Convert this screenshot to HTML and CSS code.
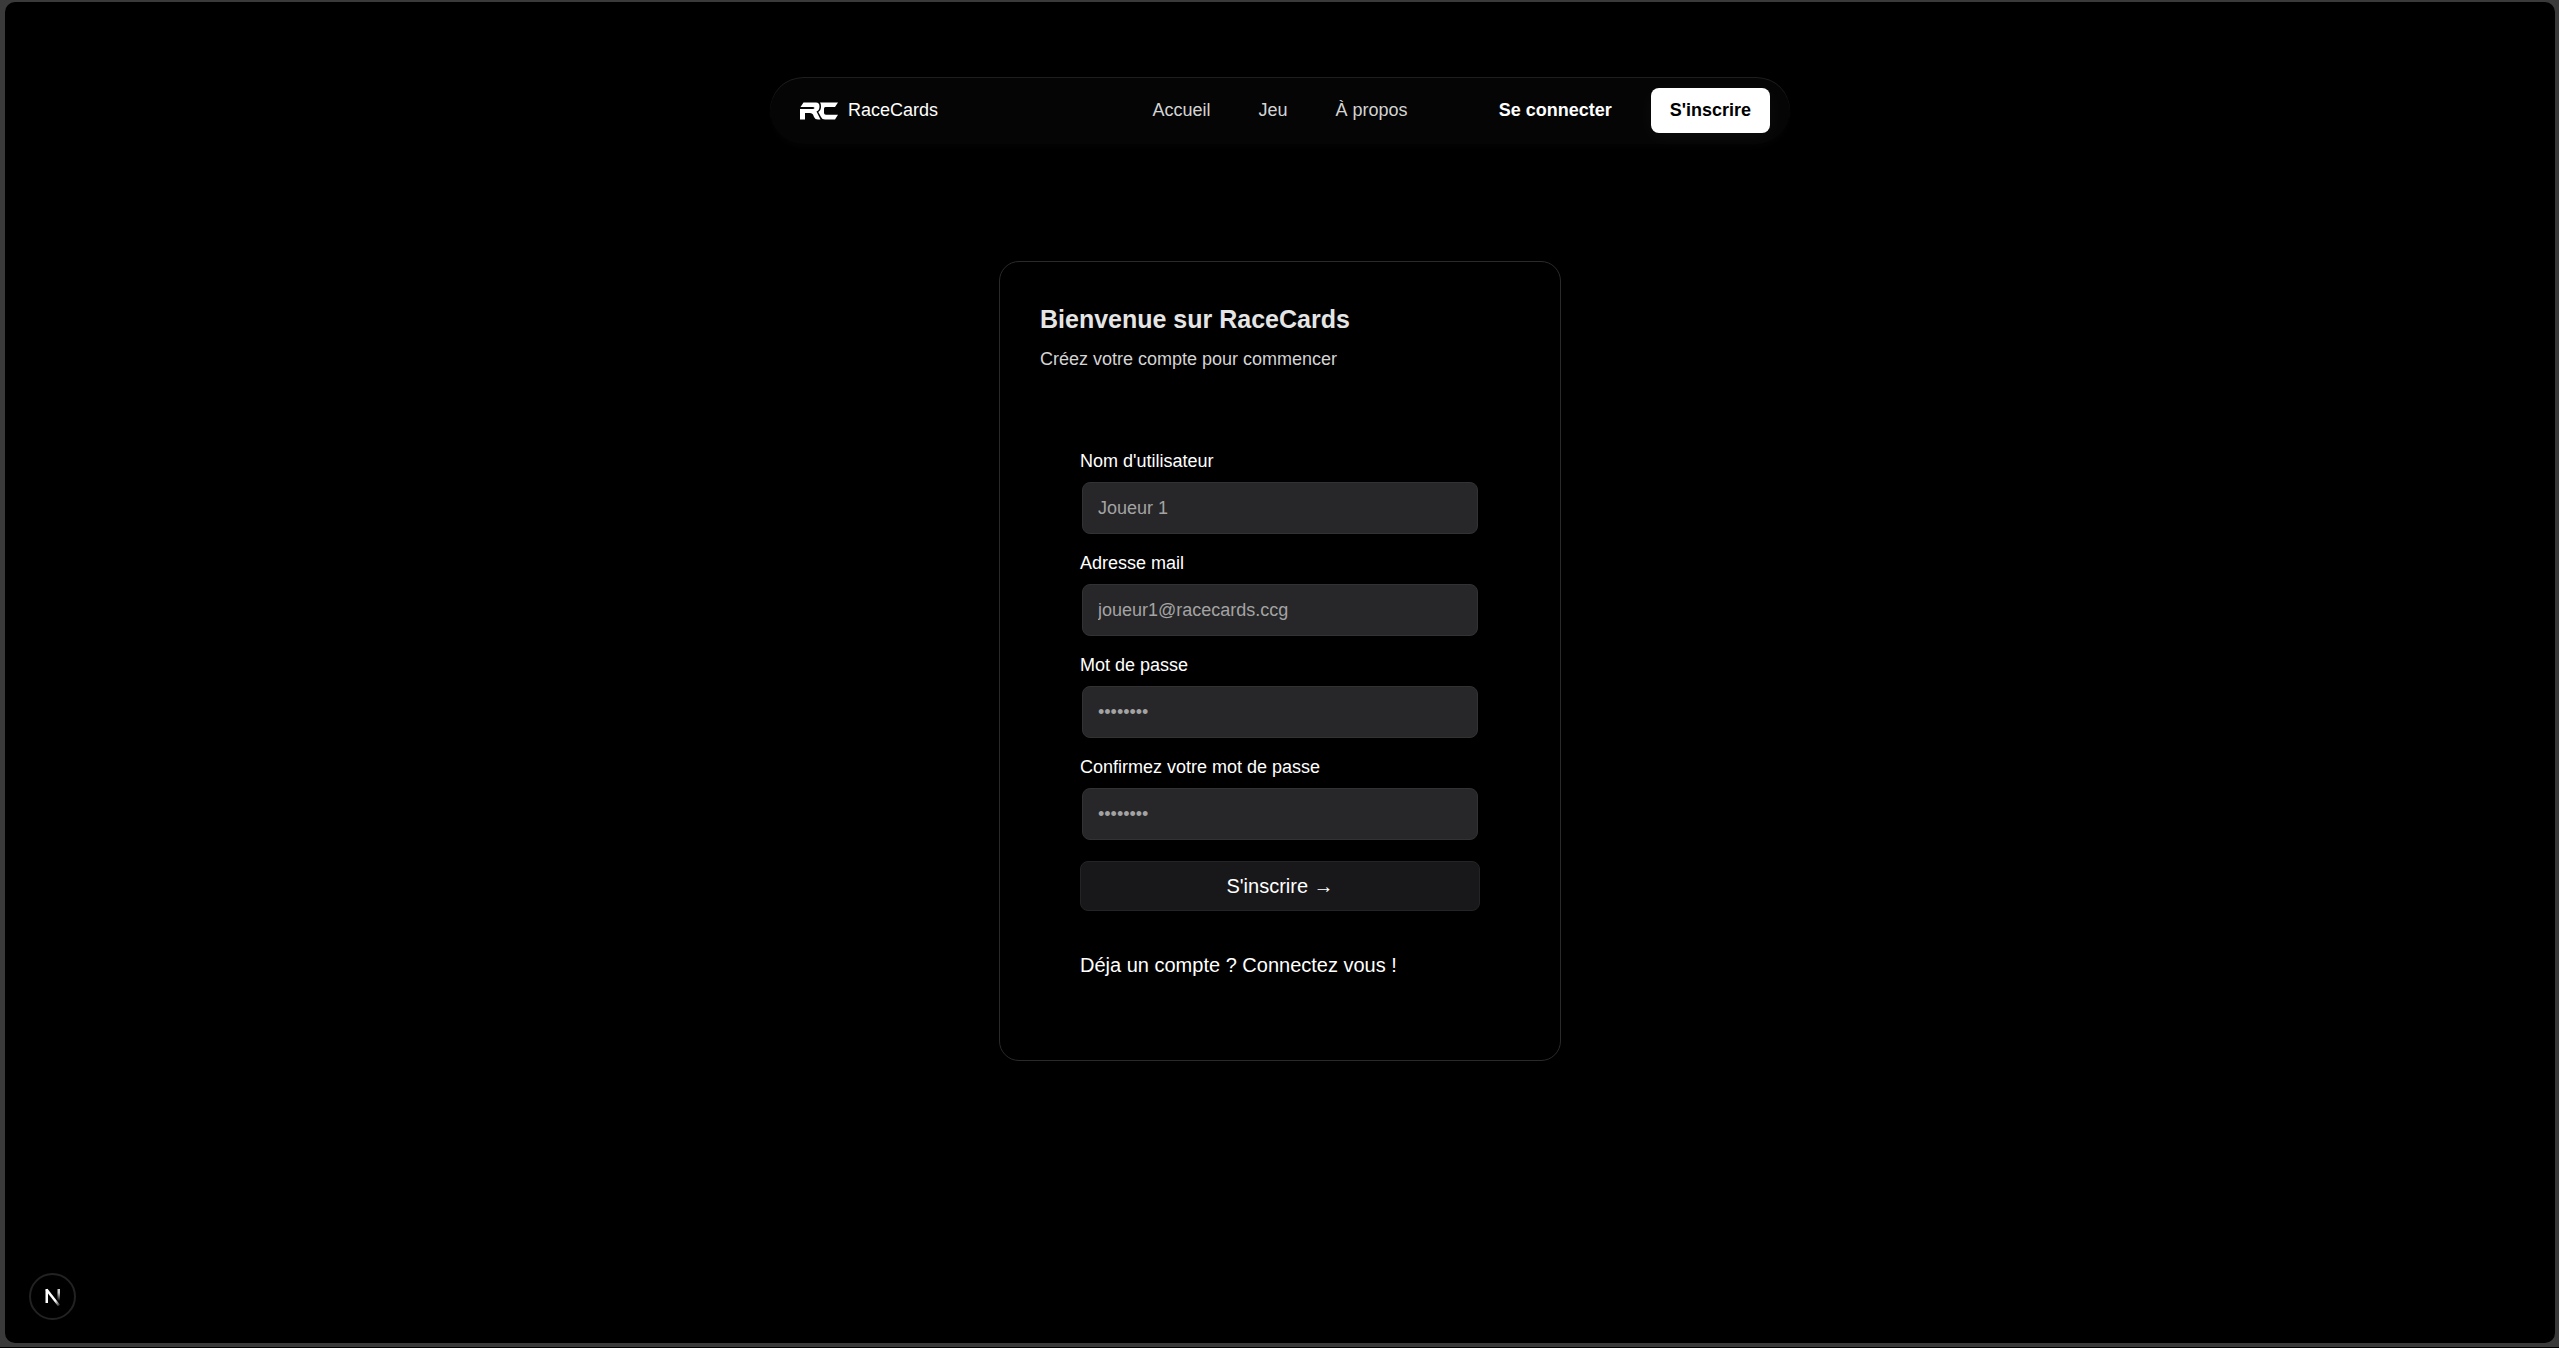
FILE: index.html
```
<!DOCTYPE html>
<html lang="fr">
<head>
    <meta charset="UTF-8">
    <meta name="viewport" content="width=device-width, initial-scale=1.0">
    <title>RaceCards</title>
    <link rel="stylesheet" href="styles.css">
</head>
<body>
    <div class="window">
        <header class="navbar">
            <a href="#" class="brand">
                <svg class="brand-logo" viewBox="0 0 38 18" aria-hidden="true">
                    <path d="M3.500 0.500H16Q19.500 0.500 19.500 4.500Q19.500 8.500 16.500 9.500L20.500 17.500H18Q15 17.500 14 15L13 12.500Q12 11 10 11H5V17.500H0V7H12.500Q14.500 7 14.500 6T12.500 5H0.500Z"/>
                    <path d="M20 0.500H38L35 5H25.500Q24 5 24 6.500V11Q24 12.800 26 12.800H38L35 17.500H25Q22 17.500 21 15L18.300 10Q21 8.500 21 4.500Q21 1.500 20 0.500Z"/>
                </svg>
                <span>RaceCards</span>
            </a>
            <nav class="nav-links">
                <a href="#">Accueil</a>
                <a href="#">Jeu</a>
                <a href="#">À propos</a>
            </nav>
            <div class="nav-actions">
                <a href="#" class="btn-text">Se connecter</a>
                <a href="#" class="btn-white">S'inscrire</a>
            </div>
        </header>

        <main class="card">
            <h1>Bienvenue sur RaceCards</h1>
            <p class="subtitle">Créez votre compte pour commencer</p>
            <form class="signup-form">
                <div class="form-group">
                    <label for="username">Nom d'utilisateur</label>
                    <input type="text" id="username" placeholder="Joueur 1">
                </div>
                <div class="form-group">
                    <label for="email">Adresse mail</label>
                    <input type="email" id="email" placeholder="joueur1@racecards.ccg">
                </div>
                <div class="form-group">
                    <label for="password">Mot de passe</label>
                    <input type="password" id="password" placeholder="••••••••">
                </div>
                <div class="form-group">
                    <label for="confirmPassword">Confirmez votre mot de passe</label>
                    <input type="password" id="confirmPassword" placeholder="••••••••">
                </div>
                <button type="submit" class="btn-submit">S'inscrire →</button>
                <a href="#" class="login-link">Déja un compte ? Connectez vous !</a>
            </form>
        </main>

        <button type="button" class="dev-badge" aria-label="Next.js">
            <svg viewBox="0 0 16 18" fill="none" aria-hidden="true">
                <defs>
                    <linearGradient id="fadeRight" x1="0" y1="0" x2="0" y2="1">
                        <stop offset="0.3" stop-color="#fff" stop-opacity="0.8"/>
                        <stop offset="1" stop-color="#fff" stop-opacity="0"/>
                    </linearGradient>
                    <linearGradient id="fadeDiagonal" x1="0" y1="0" x2="1" y2="1">
                        <stop offset="0.7" stop-color="#fff"/>
                        <stop offset="1" stop-color="#fff" stop-opacity="0.2"/>
                    </linearGradient>
                </defs>
                <rect x="0.500" y="1" width="2.500" height="14" fill="#fff"/>
                <rect x="12.500" y="1" width="2.500" height="12" fill="url(#fadeRight)"/>
                <path d="M1.500 1.500L14 17.500" stroke="url(#fadeDiagonal)" stroke-width="2.500"/>
            </svg>
        </button>
    </div>
</body>
</html>
```
FILE: styles.css
```
* {
    box-sizing: border-box;
}
html {
    background-color: #3a3a3a;
}
body {
    margin: 0;
    padding: 2px 4px 4px 5px;
    min-height: 100vh;
    display: flex;
    font-family: Arial, "Liberation Sans", sans-serif;
    font-size: 18px;
    line-height: 25px;
    color: #fff;
    border-bottom: 1px solid #000;
}
a {
    color: inherit;
    text-decoration: none;
}
.window {
    position: relative;
    flex: 1;
    display: flex;
    flex-direction: column;
    align-items: center;
    padding: 75px 0 20px;
    background-color: #000;
    border-radius: 10px;
}

/* Navbar */
.navbar {
    width: 40%;
    min-width: 960px;
    display: grid;
    grid-template-columns: 1fr auto 1fr;
    align-items: center;
    padding: 11px 20px;
    border-radius: 40px;
    background-color: #050505;
    box-shadow: 0 0 24px rgba(34, 42, 53, 0.06),
        0 4px 8px #050505,
        0 16px 68px rgba(47, 48, 55, 0.05),
        0 1px 0 rgba(255, 255, 255, 0.1) inset;
}
.brand {
    display: flex;
    align-items: center;
    gap: 10px;
    padding-left: 10px;
}
.brand-logo {
    width: 38px;
    height: 18px;
    fill: #fff;
}
.nav-links {
    display: flex;
    gap: 48px;
    color: #d4d4d4;
}
.nav-actions {
    display: flex;
    justify-content: flex-end;
    align-items: center;
    gap: 20px;
    font-weight: bold;
}
.btn-text,
.btn-white {
    padding: 10px 19px;
}
.btn-white {
    background-color: #fff;
    color: #000;
    border-radius: 8px;
    box-shadow: 0 4px 20px rgba(255, 255, 255, 0.04);
}

/* Sign up card */
.card {
    width: 562px;
    margin-top: 117px;
    padding: 40px;
    border: 1px solid #2a2a2a;
    border-radius: 20px;
}
h1 {
    margin: 0;
    font-size: 25px;
    line-height: 35px;
    color: #e5e5e5;
}
.subtitle {
    margin: 10px 0 0;
    color: #d4d4d4;
}
.signup-form {
    display: flex;
    flex-direction: column;
    gap: 19px;
    padding: 81px 40px 40px;
}
.form-group {
    display: flex;
    flex-direction: column;
    gap: 10px;
}
label {
    line-height: 17px;
}
input {
    height: 52px;
    margin: 2px;
    padding: 0 15px;
    border: 1px solid #323234;
    border-radius: 8px;
    background-color: #27272a;
    color: #fff;
    font: inherit;
}
input::placeholder {
    color: #a3a3a3;
}
.btn-submit {
    height: 50px;
    border: 1px solid #242426;
    border-radius: 8px;
    background-color: #18181b;
    color: #fff;
    font-family: inherit;
    font-size: 20px;
    cursor: pointer;
}
.login-link {
    margin-top: 20px;
    font-size: 20px;
    line-height: 30px;
}

/* Round badge over the page corner */
.dev-badge {
    position: absolute;
    left: 24px;
    bottom: 23px;
    width: 47px;
    height: 47px;
    display: flex;
    align-items: center;
    justify-content: center;
    padding: 0;
    border: 2px solid #222;
    border-radius: 50%;
    background-color: #000;
}
.dev-badge svg {
    width: 16px;
    height: 18px;
}
```
